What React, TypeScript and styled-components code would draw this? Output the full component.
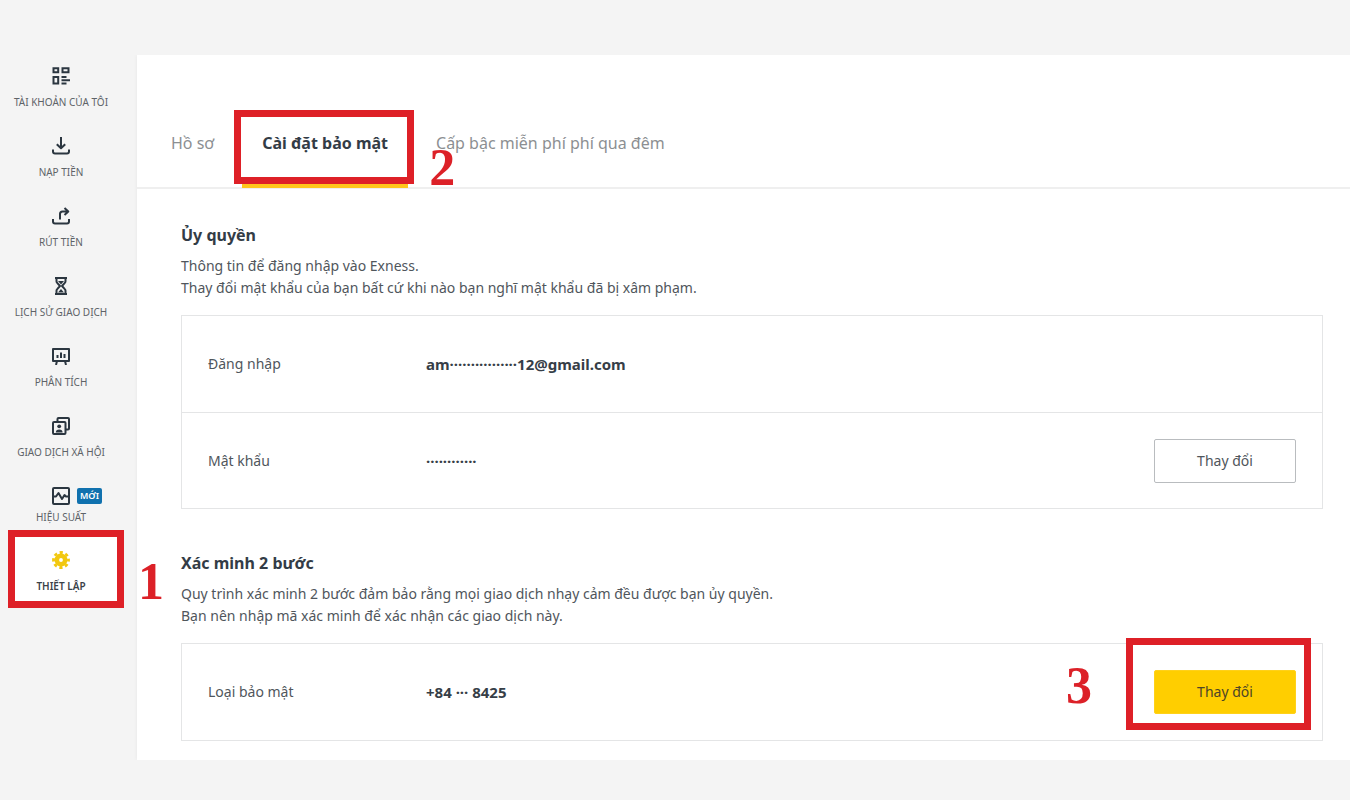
import React from "react";
import styled, { createGlobalStyle, css } from "styled-components";

const GlobalStyle = createGlobalStyle`
  *, *::before, *::after { box-sizing: border-box; }
  body {
    margin: 0;
    background: #f4f4f4;
    color: #50565c;
    font-family: "Noto Sans", "Open Sans", sans-serif;
    font-size: 14px;
    line-height: 22px;
  }
`;

const Page = styled.div`
  display: flex;
  min-height: 100vh;
  padding: 55px 0 40px;
  overflow-x: hidden;
`;

const Sidebar = styled.nav`
  flex: none;
  width: 122px;
  margin-right: 15px;
  padding-top: 11px;
`;

const NavList = styled.ul`
  list-style: none;
  margin: 0;
  padding: 0;
`;

const NavEntry = styled.li<{ $current?: boolean; $tight?: boolean }>`
  position: relative;
  height: ${(p) => (p.$tight ? 64 : 70)}px;
  ${(p) =>
    p.$current &&
    css`
      &::before {
        content: "";
        position: absolute;
        inset: -20px -2px auto 8px;
        height: 78px;
        background: #fff;
      }
    `}
`;

const NavLink = styled.a<{ $current?: boolean; $tight?: boolean }>`
  position: relative;
  display: flex;
  flex-direction: column;
  align-items: center;
  gap: ${(p) => (p.$tight ? 3 : 8)}px;
  color: ${(p) => (p.$current ? "#3a4148" : "#5e6368")};
  font-size: 10px;
  font-weight: ${(p) => (p.$current ? 600 : 400)};
  line-height: 16px;
  text-decoration: none;
  text-transform: uppercase;
  white-space: nowrap;
`;

const IconSlot = styled.span`
  position: relative;
  display: flex;
  align-items: center;
  height: 20px;
`;

const NewBadge = styled.span`
  position: absolute;
  left: 25px;
  top: 2px;
  width: 25px;
  border-radius: 2px;
  background: #1071ae;
  color: #fff;
  font-size: 9px;
  font-weight: 600;
  line-height: 16px;
  text-align: center;
`;

const Callout = styled.span<{ $inset: string; $height: number }>`
  position: absolute;
  z-index: 2;
  inset: ${(p) => p.$inset};
  height: ${(p) => p.$height}px;
  border: 7px solid #de2027;
  pointer-events: none;
`;

const StepNumber = styled.span<{ $left: number; $top: number }>`
  position: absolute;
  z-index: 3;
  left: ${(p) => p.$left}px;
  top: ${(p) => p.$top}px;
  color: #dc2128;
  font-family: "Liberation Serif", serif;
  font-size: 52px;
  font-weight: 700;
  line-height: 52px;
  pointer-events: none;
`;

const Panel = styled.main`
  flex: 1;
  min-width: 0;
  background: #fff;
  box-shadow: 0 0 4px rgba(0, 0, 0, 0.06);
  clip-path: inset(0 0 0 -4px);
`;

const Tabs = styled.div`
  display: flex;
  gap: 8px;
  padding: 56px 14px 0;
  border-bottom: 2px solid #efefef;
`;

const Tab = styled.button<{ $active?: boolean }>`
  position: relative;
  padding: 20px 20px 32px;
  border: 0;
  background: none;
  color: ${(p) => (p.$active ? "#333c46" : "#8c8f92")};
  font: inherit;
  font-size: 16px;
  font-weight: ${(p) => (p.$active ? 700 : 400)};
  line-height: 24px;
  white-space: nowrap;
  ${(p) =>
    p.$active &&
    css`
      &::after {
        content: "";
        position: absolute;
        inset: auto 0 -1px;
        height: 6px;
        background: #ffc61a;
      }
    `}
`;

const Content = styled.div`
  display: flex;
  flex-direction: column;
  gap: 42px;
  padding: 34px 27px 18px 44px;
`;

const Heading = styled.h2`
  margin: 0 0 8px;
  color: #333c46;
  font-size: 16px;
  font-weight: 700;
  line-height: 24px;
`;

const Description = styled.p`
  margin: 0 0 16px;
`;

const Card = styled.div`
  border: 1px solid #e4e5e6;
`;

const Row = styled.div`
  display: flex;
  align-items: center;
  min-height: 96px;
  padding: 0 26px;
  & + & {
    border-top: 1px solid #e4e5e6;
  }
`;

const Label = styled.span`
  width: 218px;
`;

const Value = styled.strong`
  flex: 1;
  color: #363e47;
  font-size: 15px;
  font-weight: 700;
`;

const ActionSlot = styled.div`
  position: relative;
`;

const ActionButton = styled.button<{ $primary?: boolean }>`
  display: block;
  width: 142px;
  height: 44px;
  border: 1px solid ${(p) => (p.$primary ? "#ffd11a" : "#b9bcbf")};
  border-radius: 2px;
  background: ${(p) => (p.$primary ? "#ffce00" : "#fff")};
  color: ${(p) => (p.$primary ? "#4d4527" : "#50565c")};
  font: inherit;
`;

const Svg = ({ children, color = "#2b3640" }: { children: React.ReactNode; color?: string }) => (
  <svg
    width="18"
    height="18"
    viewBox="0 0 18 18"
    fill="none"
    stroke={color}
    strokeWidth="2"
    strokeLinejoin="round"
    aria-hidden="true"
  >
    {children}
  </svg>
);

const AccountsIcon = () => (
  <Svg>
    <path d="M1.5 1.2h4.7v4H1.5zM10.5 1.2h6v4h-6zM1.5 10h4.7v6.500H1.500z" strokeLinejoin="miter" />
    <path d="M9.500 10h5M9.500 13.300h8.500M9.500 16.600h5" />
  </Svg>
);

const DepositIcon = () => (
  <Svg>
    <path d="M9 0v11M4.800 7.200L9 11.300l4.200-4.100M1 12.500v2q0 2 2 2h12q2 0 2-2v-2" />
  </Svg>
);

const WithdrawIcon = () => (
  <Svg>
    <path d="M8 12.500V7q0-2.500 2.500-2.500H16M12.500 1l3.800 3.500-3.800 3.500M1 12v2.500q0 2 2 2h12q2 0 2-2V12" />
  </Svg>
);

const HistoryIcon = () => (
  <Svg>
    <path d="M3 1h12M3 17h12M4.500 1v3.200q0 1 .7 1.700L8 9l-2.800 3.100q-.7.700-.7 1.700V17M13.500 1v3.200q0 1-.7 1.700L10 9l2.800 3.100q.7.700.7 1.700V17" />
    <path d="M6 4h6L9 7.500zM6 15.500L9 12l3 3.500z" fill="#2b3640" stroke="none" />
  </Svg>
);

const AnalyticsIcon = () => (
  <Svg>
    <path d="M1 2h16v12H1zM5 14l-1 4M13 14l1 4" />
    <path d="M5.500 8v3M9 5.500V11M12.500 7v4" />
  </Svg>
);

const SocialIcon = () => (
  <Svg>
    <path d="M5.500 4.500V2q0-1 1-1H16q1 0 1 1v9.500q0 1-1 1h-2.500" />
    <path d="M2 5h10.500q1 0 1 1v10q0 1-1 1H2q-1 0-1-1V6q0-1 1-1z" />
    <circle cx="7.200" cy="9.300" r="1.900" fill="#2b3640" stroke="none" />
    <path d="M3.800 15.500q0-3 3.400-3t3.400 3z" fill="#2b3640" stroke="none" />
  </Svg>
);

const PerformanceIcon = () => (
  <Svg>
    <rect x="1" y="1" width="16" height="16" rx="1" />
    <path d="M1 9.500h3L6.500 6l3.500 6 2.500-4 1.500 1.500h3" />
  </Svg>
);

const SettingsIcon = () => (
  <Svg color="#f2c80f">
    <circle cx="9" cy="9" r="4.200" strokeWidth="4.600" />
    <circle cx="9" cy="9" r="7.500" strokeWidth="2.800" strokeDasharray="3.200 2.690" strokeDashoffset="1.600" />
  </Svg>
);

type NavItem = { label: string; icon: React.ReactNode; badge?: string; current?: boolean };

const navItems: NavItem[] = [
  { label: "Tài khoản của tôi", icon: <AccountsIcon /> },
  { label: "Nạp tiền", icon: <DepositIcon /> },
  { label: "Rút tiền", icon: <WithdrawIcon /> },
  { label: "Lịch sử giao dịch", icon: <HistoryIcon /> },
  { label: "Phân tích", icon: <AnalyticsIcon /> },
  { label: "Giao dịch xã hội", icon: <SocialIcon /> },
  { label: "Hiệu suất", icon: <PerformanceIcon />, badge: "MỚI" },
  { label: "Thiết lập", icon: <SettingsIcon />, current: true },
];

export default function App() {
  return (
    <>
      <GlobalStyle />
      <Page>
        <Sidebar>
          <NavList>
            {navItems.map(({ label, icon, badge, current }) => (
              <NavEntry key={label} $current={current} $tight={!!badge}>
                <NavLink href="#" $current={current} $tight={!!badge}>
                  <IconSlot>
                    {icon}
                    {badge && <NewBadge>{badge}</NewBadge>}
                  </IconSlot>
                  {label}
                </NavLink>
                {current && (
                  <>
                    <Callout $inset="-20px -2px auto 8px" $height={78} />
                    <StepNumber $left={138} $top={6}>1</StepNumber>
                  </>
                )}
              </NavEntry>
            ))}
          </NavList>
        </Sidebar>
        <Panel>
          <Tabs role="tablist">
            <Tab role="tab">Hồ sơ</Tab>
            <Tab role="tab" $active aria-selected="true">
              Cài đặt bảo mật
              <Callout $inset="-1px -6px auto -8px" $height={74} />
              <StepNumber $left={187} $top={31}>2</StepNumber>
            </Tab>
            <Tab role="tab">Cấp bậc miễn phí phí qua đêm</Tab>
          </Tabs>
          <Content>
            <section>
              <Heading>Ủy quyền</Heading>
              <Description>
                Thông tin để đăng nhập vào Exness.
                <br />
                Thay đổi mật khẩu của bạn bất cứ khi nào bạn nghĩ mật khẩu đã bị xâm phạm.
              </Description>
              <Card>
                <Row>
                  <Label>Đăng nhập</Label>
                  <Value>am················12@gmail.com</Value>
                </Row>
                <Row>
                  <Label>Mật khẩu</Label>
                  <Value>············</Value>
                  <ActionSlot>
                    <ActionButton>Thay đổi</ActionButton>
                  </ActionSlot>
                </Row>
              </Card>
            </section>
            <section>
              <Heading>Xác minh 2 bước</Heading>
              <Description>
                Quy trình xác minh 2 bước đảm bảo rằng mọi giao dịch nhạy cảm đều được bạn ủy quyền.
                <br />
                Bạn nên nhập mã xác minh để xác nhận các giao dịch này.
              </Description>
              <Card>
                <Row>
                  <Label>Loại bảo mật</Label>
                  <Value>+84 ··· 8425</Value>
                  <ActionSlot>
                    <ActionButton $primary>Thay đổi</ActionButton>
                    <Callout $inset="-32px -15px auto -28px" $height={92} />
                    <StepNumber $left={-88} $top={-10}>3</StepNumber>
                  </ActionSlot>
                </Row>
              </Card>
            </section>
          </Content>
        </Panel>
      </Page>
    </>
  );
}
